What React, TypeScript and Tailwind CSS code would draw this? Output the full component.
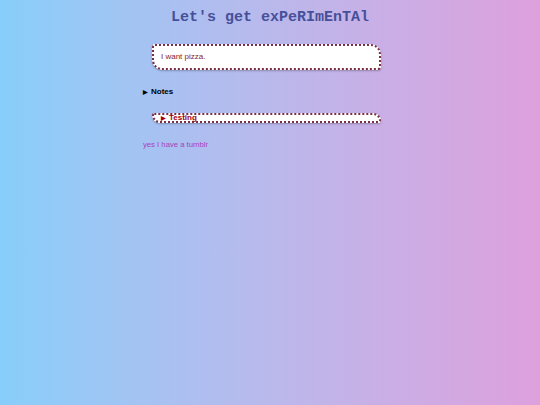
export default function App() {
  return (
    <div className="h-[405px] w-[540px] overflow-hidden bg-linear-to-r from-[#87cefa] to-[#dda0dd] font-['Liberation_Sans',Arial,sans-serif]">
      <h1 className="pt-[10px] text-center font-['Liberation_Mono','Courier_New',monospace] text-[15px] font-bold leading-[16px] text-[#46509a]">
        Let's get exPeRImEnTAl
      </h1>

      <div className="ml-[143px] w-[254px]">
        <div className="mt-[18px] ml-[9px] flex h-[26px] w-[229px] items-center rounded-[3px_10px_3px_10px] border-2 border-dotted border-[#7b2d45] bg-white pl-[7px] shadow-[0_1px_2px_rgba(0,0,0,0.25)]">
          <p className="text-[8px] leading-[10px] text-[#8b1a2a]">I want pizza.</p>
        </div>

        <div className="mt-[17px] flex items-center gap-[3px] text-[8px] font-bold leading-[10px] text-black">
          <span className="text-[6px]">▶</span>
          <span>Notes</span>
        </div>

        <div className="mt-[16px] ml-[9px] flex h-[10px] w-[229px] items-center rounded-[3px_10px_3px_10px] border-2 border-dotted border-[#7b2d45] bg-white pl-[7px] shadow-[0_1px_2px_rgba(0,0,0,0.25)]">
          <div className="flex items-center gap-[3px] text-[8px] font-bold leading-[10px] text-[#a00010]">
            <span className="text-[6px]">▶</span>
            <span>Testing</span>
          </div>
        </div>

        <p className="mt-[17px] text-[7.7px] leading-[10px] text-[#a83fbc]">yes I have a tumblr</p>
      </div>
    </div>
  );
}
